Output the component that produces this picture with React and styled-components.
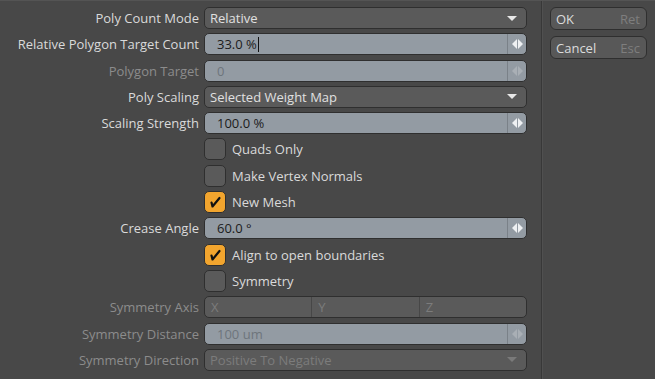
import React from "react";
import styled, { createGlobalStyle } from "styled-components";

const Global = createGlobalStyle`
  html, body {
    margin: 0;
    padding: 0;
    background: #484848;
    overflow: hidden;
  }
  body {
    font-family: "Open Sans", "Liberation Sans", sans-serif;
    font-size: 13px;
  }
`;

const Window = styled.div`
  display: flex;
  width: 655px;
  height: 379px;
  background: #484848;
  border-top: 1px solid #545454;
  box-sizing: border-box;
`;

const Form = styled.div`
  width: 542px;
  flex: none;
  box-sizing: border-box;
  padding: 6px 15px 0 0;
  border-right: 1px solid #383838;
  display: grid;
  grid-template-columns: 199px 323px;
  column-gap: 5px;
  grid-auto-rows: 22px;
  row-gap: 4.3px;
  align-items: center;
`;

const Side = styled.div`
  flex: 1;
  padding: 6px 8px 0 7px;
  display: flex;
  flex-direction: column;
  gap: 6px;
  border-left: 1px solid #505050;
`;

const Label = styled.div`
  text-align: right;
  white-space: nowrap;
  color: ${(p) => (p.$off ? "#8c8c8c" : "#dadada")};
`;

const Field = styled.div`
  height: 22px;
  box-sizing: border-box;
  border: 1px solid #2f2f2f;
  border-radius: 5px;
  display: flex;
  align-items: center;
  overflow: hidden;
`;

const Select = styled(Field)`
  background: #5a5a5a;
  color: ${(p) => (p.$off ? "#7c7c7c" : "#e0e0e0")};
  padding: 0 9px 0 5px;
  justify-content: space-between;
`;

const Arrow = styled.span`
  width: 0;
  height: 0;
  border-left: 5px solid transparent;
  border-right: 5px solid transparent;
  border-top: 5px solid ${(p) => (p.$off ? "#7a7a7a" : "#e8e8e8")};
`;

const Number = styled(Field)`
  background: #939ba3;
  color: ${(p) => (p.$off ? "#6e757c" : "#1c1c1c")};
`;

const Value = styled.div`
  flex: 1;
  padding-left: 12px;
  display: flex;
  align-items: center;
`;

const Caret = styled.span`
  width: 1px;
  height: 15px;
  background: #111;
  margin-left: 1px;
`;

const Spin = styled.div`
  width: 18px;
  align-self: stretch;
  border-left: 1px solid #7a8188;
  display: flex;
  align-items: center;
  justify-content: center;
  gap: 1px;
`;

const Tri = styled.span`
  width: 0;
  height: 0;
  border-top: 5px solid transparent;
  border-bottom: 5px solid transparent;
  ${(p) =>
    p.$dir === "l"
      ? `border-right: 5px solid ${p.$off ? "#a9afb5" : "#eef0f2"};`
      : `border-left: 5px solid ${p.$off ? "#a9afb5" : "#eef0f2"};`}
`;

const Check = styled.label`
  grid-column: 2;
  display: flex;
  align-items: center;
  gap: 6px;
  color: #dadada;
`;

const Box = styled.span`
  width: 22px;
  height: 22px;
  box-sizing: border-box;
  border: 1px solid #2f2f2f;
  border-radius: 5px;
  background: ${(p) => (p.$on ? "#f2a52e" : "#5a5a5a")};
  display: flex;
  align-items: center;
  justify-content: center;
`;

const Segments = styled(Field)`
  background: #5a5a5a;
  color: #7c7c7c;
`;

const Segment = styled.div`
  flex: 1;
  align-self: stretch;
  display: flex;
  align-items: center;
  padding-left: 6px;
  & + & {
    border-left: 1px solid #474747;
  }
`;

const Button = styled.div`
  height: 23px;
  box-sizing: border-box;
  border: 1px solid #2f2f2f;
  border-radius: 6px;
  background: #585858;
  display: flex;
  align-items: center;
  justify-content: space-between;
  padding: 0 6px 0 5px;
  color: #dcdcdc;
`;

const Key = styled.span`
  color: #7e7e7e;
`;

// slanted check, bottom point sits to the left
const Tick = () => (
  <svg width="14" height="14" viewBox="0 0 14 14">
    <path d="M3.5 7.5 L4.5 11.5 L11.5 3" fill="none" stroke="#111" strokeWidth="2.2" strokeLinecap="round" strokeLinejoin="round" />
  </svg>
);

const Spinner = ({ off }) => (
  <Spin>
    <Tri $dir="l" $off={off} />
    <Tri $dir="r" $off={off} />
  </Spin>
);

const CheckRow = ({ on, children }) => (
  <Check>
    <Box $on={on}>{on && <Tick />}</Box>
    {children}
  </Check>
);

export default function App() {
  return (
    <>
      <Global />
      <Window>
        <Form>
          <Label>Poly Count Mode</Label>
          <Select>
            Relative
            <Arrow />
          </Select>

          <Label>Relative Polygon Target Count</Label>
          <Number>
            <Value>
              33.0 %<Caret />
            </Value>
            <Spinner />
          </Number>

          <Label $off>Polygon Target</Label>
          <Number $off>
            <Value>0</Value>
            <Spinner off />
          </Number>

          <Label>Poly Scaling</Label>
          <Select>
            Selected Weight Map
            <Arrow />
          </Select>

          <Label>Scaling Strength</Label>
          <Number>
            <Value>100.0 %</Value>
            <Spinner />
          </Number>

          <CheckRow>Quads Only</CheckRow>
          <CheckRow>Make Vertex Normals</CheckRow>
          <CheckRow on>New Mesh</CheckRow>

          <Label>Crease Angle</Label>
          <Number>
            <Value>60.0 °</Value>
            <Spinner />
          </Number>

          <CheckRow on>Align to open boundaries</CheckRow>
          <CheckRow>Symmetry</CheckRow>

          <Label $off>Symmetry Axis</Label>
          <Segments>
            <Segment>X</Segment>
            <Segment>Y</Segment>
            <Segment>Z</Segment>
          </Segments>

          <Label $off>Symmetry Distance</Label>
          <Number $off>
            <Value>100 um</Value>
            <Spinner off />
          </Number>

          <Label $off>Symmetry Direction</Label>
          <Select $off>
            Positive To Negative
            <Arrow $off />
          </Select>
        </Form>
        <Side>
          <Button>
            OK<Key>Ret</Key>
          </Button>
          <Button>
            Cancel<Key>Esc</Key>
          </Button>
        </Side>
      </Window>
    </>
  );
}
